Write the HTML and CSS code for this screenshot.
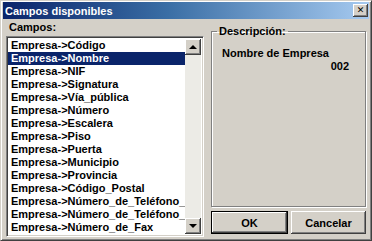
FILE: index.html
```html
<!DOCTYPE html>
<html lang="es">
<head>
    <meta charset="UTF-8">
    <title>Campos disponibles</title>
    <link rel="stylesheet" href="styles.css">
</head>
<body>
    <div class="window">
        <div class="titlebar">
            <span class="title">Campos disponibles</span>
            <button class="close-btn">&#x2715;</button>
        </div>

        <div class="content">
            <div class="left-col">
                <div class="label">Campos:</div>
                <div class="listbox">
                    <ul class="items">
                        <li>Empresa-&gt;Código</li>
                        <li class="selected">Empresa-&gt;Nombre</li>
                        <li>Empresa-&gt;NIF</li>
                        <li>Empresa-&gt;Signatura</li>
                        <li>Empresa-&gt;Vía_pública</li>
                        <li>Empresa-&gt;Número</li>
                        <li>Empresa-&gt;Escalera</li>
                        <li>Empresa-&gt;Piso</li>
                        <li>Empresa-&gt;Puerta</li>
                        <li>Empresa-&gt;Municipio</li>
                        <li>Empresa-&gt;Provincia</li>
                        <li>Empresa-&gt;Código_Postal</li>
                        <li>Empresa-&gt;Número_de_Teléfono_1</li>
                        <li>Empresa-&gt;Número_de_Teléfono_2</li>
                        <li>Empresa-&gt;Número_de_Fax</li>
                        <li>Empresa-&gt;Código_de_Gestión</li>
                    </ul>
                    <div class="scrollbar">
                        <div class="arrow-btn"><span class="arrow up"></span></div>
                        <div class="track"></div>
                        <div class="arrow-btn"><span class="arrow down"></span></div>
                    </div>
                </div>
            </div>

            <div class="right-col">
                <fieldset class="groupbox">
                    <legend>Descripción:</legend>
                    <div class="desc-name">Nombre de Empresa</div>
                    <div class="desc-code">002</div>
                </fieldset>
                <div class="buttons">
                    <button class="btn default">OK</button>
                    <button class="btn">Cancelar</button>
                </div>
            </div>
        </div>
    </div>
</body>
</html>
```

FILE: styles.css
```css
/* Diálogo estilo Windows clásico */
html, body {
    margin: 0;
    padding: 0;
}

body {
    width: 372px;
    height: 241px;
    overflow: hidden;
    font-family: "Liberation Sans", Arial, sans-serif;
    font-weight: bold;
    font-size: 11px;
    color: #000;
}

.window {
    width: 372px;
    height: 241px;
    box-sizing: border-box;
    background-color: #d4d0c8;
    border-left: 1px solid #d4d0c8;
    border-top: 1px solid #d4d0c8;
    border-right: 1px solid #404040;
    border-bottom: 1px solid #404040;
    box-shadow: inset 1px 1px 0 #fff, inset -1px -1px 0 #808080;
    padding: 1px 2px 2px 2px;
    display: flex;
    flex-direction: column;
}

.titlebar {
    height: 17px;
    background: linear-gradient(to right, #0a246a, #3a6ea5 45%, #a6caf0);
    display: flex;
    align-items: center;
    justify-content: space-between;
    padding: 0 1px 0 2px;
}

.title {
    color: #fff;
    font-size: 11px;
    font-weight: bold;
}

.close-btn {
    width: 15px;
    height: 13px;
    padding: 0;
    background-color: #d4d0c8;
    border: none;
    box-shadow: inset -1px -1px 0 #404040, inset 1px 1px 0 #fff, inset -2px -2px 0 #808080;
    font-size: 9px;
    font-weight: bold;
    line-height: 13px;
    color: #000;
    font-family: "DejaVu Sans", sans-serif;
}

.content {
    flex: 1;
    display: flex;
    gap: 7px;
    padding: 0 3px 0 3px;
    min-height: 0;
}

.left-col {
    width: 198px;
    display: flex;
    flex-direction: column;
}

.label {
    height: 17px;
    line-height: 14px;
    padding-left: 3px;
    padding-top: 1px;
    box-sizing: border-box;
}

.listbox {
    flex: 1;
    display: flex;
    background-color: #fff;
    border-top: 1px solid #808080;
    border-left: 1px solid #808080;
    border-right: 1px solid #fff;
    border-bottom: 1px solid #fff;
    box-shadow: inset 1px 1px 0 #404040, inset -1px -1px 0 #d4d0c8;
    padding: 2px 2px 2px 1px;
    overflow: hidden;
    min-height: 0;
    margin-bottom: 1px;
}

.items {
    flex: 1;
    list-style: none;
    margin: 0;
    padding: 0;
    overflow: hidden;
    min-width: 0;
}

.items li {
    height: 13px;
    line-height: 13px;
    padding-left: 3px;
    white-space: nowrap;
    overflow: hidden;
}

.items li.selected {
    background-color: #0a246a;
    color: #fff;
}

.scrollbar {
    width: 16px;
    display: flex;
    flex-direction: column;
    background-color: #ecebe6;
}

.track {
    flex: 1;
}

.arrow-btn {
    height: 16px;
    background-color: #d4d0c8;
    box-shadow: inset -1px -1px 0 #404040, inset 1px 1px 0 #fff, inset -2px -2px 0 #808080;
    display: flex;
    align-items: center;
    justify-content: center;
}

.arrow {
    width: 0;
    height: 0;
    border-left: 4px solid transparent;
    border-right: 4px solid transparent;
}

.arrow.up {
    border-bottom: 4px solid #000;
}

.arrow.down {
    border-top: 4px solid #000;
}

.right-col {
    flex: 1;
    display: flex;
    flex-direction: column;
    padding-top: 6px;
}

.groupbox {
    flex: 1;
    margin: 0;
    padding: 6px 8px 0 8px;
    border: 1px solid #808080;
    box-shadow: 1px 1px 0 #fff, inset 1px 1px 0 #fff;
}

.groupbox legend {
    padding: 0 2px;
    margin-left: -3px;
    font-size: 11px;
}

.desc-name {
    margin-top: 4px;
    padding-left: 2px;
}

.desc-code {
    text-align: right;
    padding-right: 8px;
    margin-top: 1px;
}

.buttons {
    display: flex;
    gap: 3px;
    padding: 4px 0 4px 0;
}

.btn {
    flex: 1;
    height: 23px;
    background-color: #d4d0c8;
    border: none;
    box-shadow: inset -1px -1px 0 #404040, inset 1px 1px 0 #fff, inset -2px -2px 0 #808080;
    font-family: "Liberation Sans", Arial, sans-serif;
    font-weight: bold;
    font-size: 11px;
    color: #000;
}

.btn.default {
    border: 1px solid #000;
}
```
